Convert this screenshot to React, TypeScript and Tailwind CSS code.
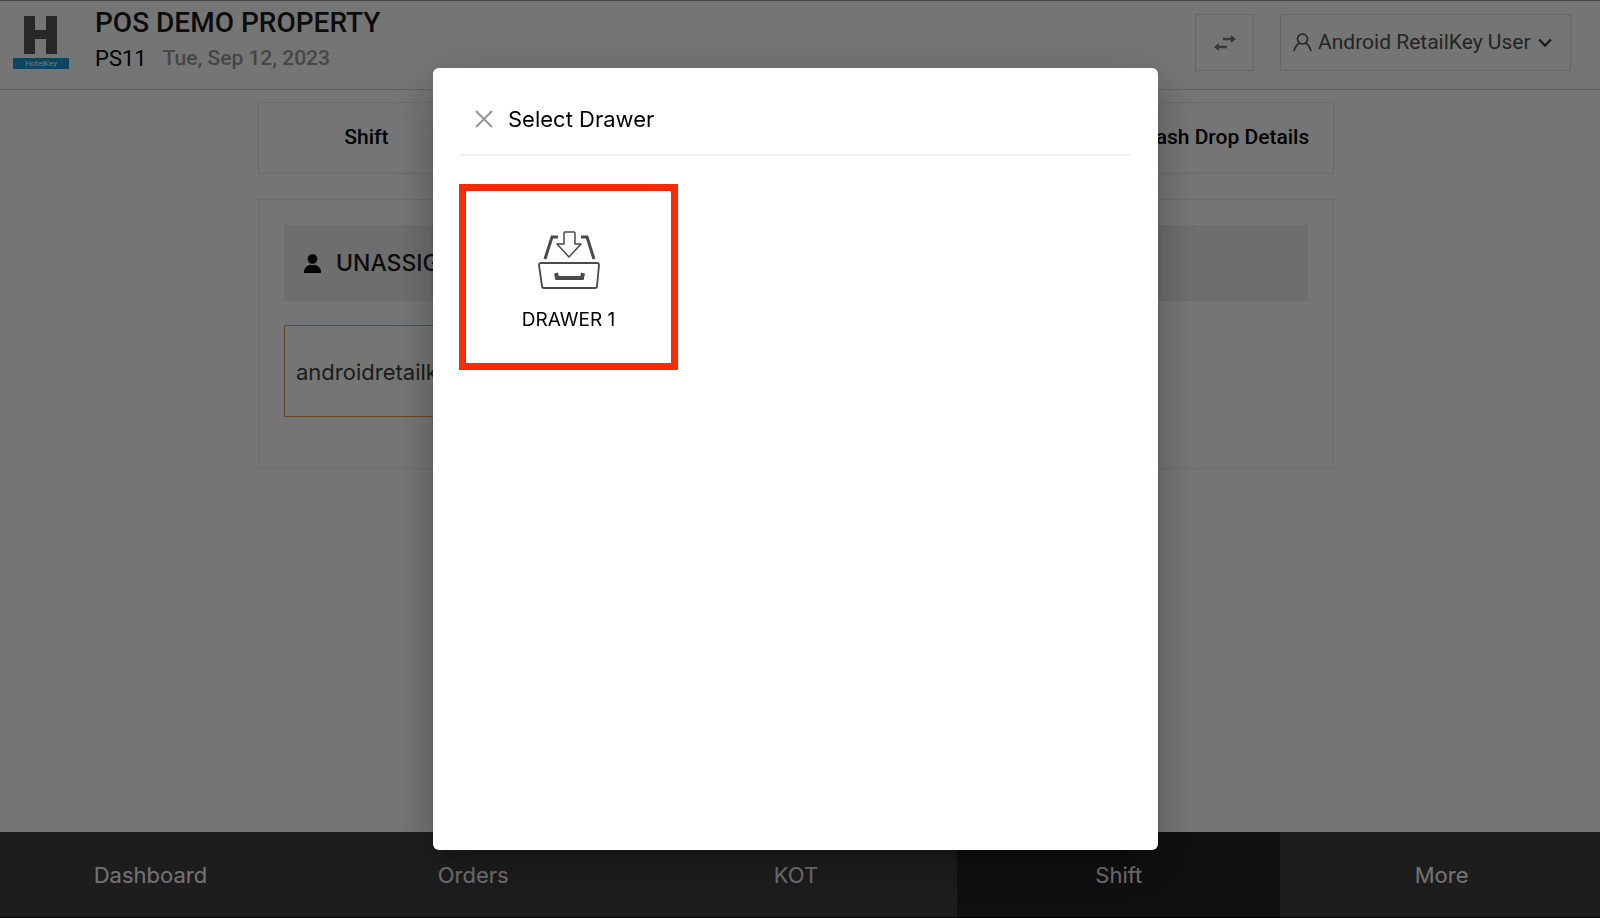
import type { ReactNode } from "react";

const navItems = [
  { label: "Dashboard", active: false },
  { label: "Orders", active: false },
  { label: "KOT", active: false },
  { label: "Shift", active: true },
  { label: "More", active: false },
];

function Logo() {
  return (
    <svg width="56" height="54" viewBox="0 0 56 54" role="img" aria-label="HotelKey">
      <path d="M11 0h11v14h11V0h11v38H33V23H22v15H11z" fill="#585858" />
      <rect y="42" width="56" height="11" fill="#2098cc" />
      <text x="28" y="50" textAnchor="middle" fontSize="8" fill="#fff" fontFamily="Roboto, sans-serif">
        HotelKey
      </text>
    </svg>
  );
}

function SwapIcon() {
  return (
    <svg width="24" height="18" viewBox="0 0 24 18" fill="none" stroke="#7a7a7a" strokeWidth="2">
      <path d="M10 5h9M5 13h9" strokeWidth="2.5" />
      <path d="M18 1l5 4-5 4zM6 9l-5 4 5 4z" fill="#7a7a7a" stroke="none" />
    </svg>
  );
}

function DrawerIcon() {
  return (
    <svg width="62" height="60" viewBox="0 0 62 60" fill="none" stroke="#4a4a4a" strokeLinejoin="round">
      <path d="M20 7h-6L7 29M43 7h6l7 22" strokeWidth="3" strokeLinejoin="miter" />
      <path d="M26 3q0-1 1-1h9q1 0 1 1v11h6L31 27 19 14h7z" fill="#fff" strokeWidth="1.5" />
      <path d="M3 33h56q2 0 2 2l-2 21q0 2-2 2H6q-2 0-2-2L1 35q0-2 2-2z" strokeWidth="1.8" />
      <path d="M18 43l1 5h25l1-5" strokeWidth="4" strokeLinejoin="miter" />
    </svg>
  );
}

function Tab({ className = "", children }: { className?: string; children: ReactNode }) {
  return (
    <button type="button" className={`text-[21px] font-medium whitespace-nowrap ${className}`}>
      {children}
    </button>
  );
}

function Header() {
  return (
    <header className="flex h-[90px] justify-between border-t border-b border-[#d4d4d4] border-t-[#9a9a9a] pl-[13px] pr-[29px]">
      <div className="flex gap-[26px]">
        <div className="pt-[15px]">
          <Logo />
        </div>
        <div className="pt-1">
          <h1 className="text-[28px] leading-9 font-medium text-[#1c1c1c]">POS DEMO PROPERTY</h1>
          <p className="flex gap-4 text-[21px] leading-[35px]">
            <span className="text-[22px] text-black">PS11</span>
            <span className="font-medium text-[#9a9a9a]">Tue, Sep 12, 2023</span>
          </p>
        </div>
      </div>
      <div className="flex gap-[26px] pt-[13px]">
        <button
          type="button"
          aria-label="Switch"
          className="flex h-[57px] w-[59px] items-center justify-center border border-[#dedede]"
        >
          <SwapIcon />
        </button>
        <button
          type="button"
          className="flex h-[57px] w-[291px] items-center gap-[6px] border border-[#dedede] pl-3 text-[21px] text-[#505050]"
        >
          <svg width="19" height="19" viewBox="0 0 19 19" fill="none" stroke="#505050" strokeWidth="1.6">
            <circle cx="9.5" cy="6" r="5" />
            <path d="M1 18q1-5 5.5-8M18 18q-1-5-5.5-8" />
          </svg>
          Android RetailKey User
          <svg width="16" height="10" viewBox="0 0 16 10" fill="none" stroke="#404040" strokeWidth="2.4">
            <path d="M2 1.5l6 6 6-6" />
          </svg>
        </button>
      </div>
    </header>
  );
}

function ShiftPage() {
  return (
    <main className="flex-1 pt-3 pr-2">
      <div className="mx-auto w-[1076px] max-w-full">
        <div className="grid h-[72px] grid-cols-5 border border-[#ebebeb]">
          <Tab>Shift</Tab>
          <Tab className="col-start-5">Cash Drop Details</Tab>
        </div>
        <section className="mt-[25px] h-[270px] border border-[#eeeeee] p-[25px] font-[Inter,sans-serif]">
          <h2 className="flex h-[76px] items-center gap-[15px] bg-[#efefef] pl-5 text-[23px] font-medium text-[#1c1c1c]">
            <svg width="17" height="19" viewBox="0 0 17 19" fill="#000">
              <circle cx="8.5" cy="5" r="4.8" />
              <path d="M0 19v-2q1-5 6-6h5q5 1 6 6v2z" />
            </svg>
            UNASSIGNED
          </h2>
          <button
            type="button"
            className="mt-6 flex h-[92px] w-[320px] items-center border border-[#d8a060] pt-[2px] pl-[11px] text-[22px] text-[#404040]"
          >
            androidretailkey
          </button>
        </section>
      </div>
    </main>
  );
}

function BottomNav() {
  return (
    <nav className="-mr-[3px] -ml-[11px] grid h-[86px] grid-cols-5 border-b border-black bg-[#414141] font-[Inter,sans-serif] text-[22px]">
      {navItems.map((item) => (
        <a
          key={item.label}
          href="#"
          className={`flex items-center justify-center pt-[2px] text-[#fafafa] ${item.active ? "bg-[#232323]" : ""}`}
        >
          {item.label}
        </a>
      ))}
    </nav>
  );
}

function SelectDrawerDialog() {
  return (
    <div className="fixed inset-0 flex justify-center bg-black/54 py-[68px] pr-[9px]">
      <div
        role="dialog"
        aria-labelledby="dialog-title"
        className="w-[725px] max-w-full rounded-md bg-white px-[27px] font-[Inter,sans-serif] text-black shadow-[0_11px_15px_-7px_rgba(0,0,0,0.2),0_24px_38px_3px_rgba(0,0,0,0.14),0_9px_46px_8px_rgba(0,0,0,0.12)]"
      >
        <div className="flex h-[88px] items-center gap-[15px] border-b-2 border-[#f2f2f2] pt-4 pl-[15px]">
          <button type="button" aria-label="Close">
            <svg width="18" height="18" viewBox="0 0 18 18" stroke="#999" strokeWidth="2.2">
              <path d="M1 1l16 16M17 1L1 17" />
            </svg>
          </button>
          <h2 id="dialog-title" className="text-[22px]">
            Select Drawer
          </h2>
        </div>
        <button
          type="button"
          className="mt-7 -ml-px flex h-[186px] w-[219px] flex-col items-center justify-center gap-4 border-[7px] border-[#fa2a05] pt-[10px] text-[19px]"
        >
          <DrawerIcon />
          DRAWER 1
        </button>
      </div>
    </div>
  );
}

export default function App() {
  return (
    <div className="flex min-h-screen flex-col overflow-hidden bg-white font-[Roboto,sans-serif]">
      <Header />
      <ShiftPage />
      <BottomNav />
      <SelectDrawerDialog />
    </div>
  );
}
